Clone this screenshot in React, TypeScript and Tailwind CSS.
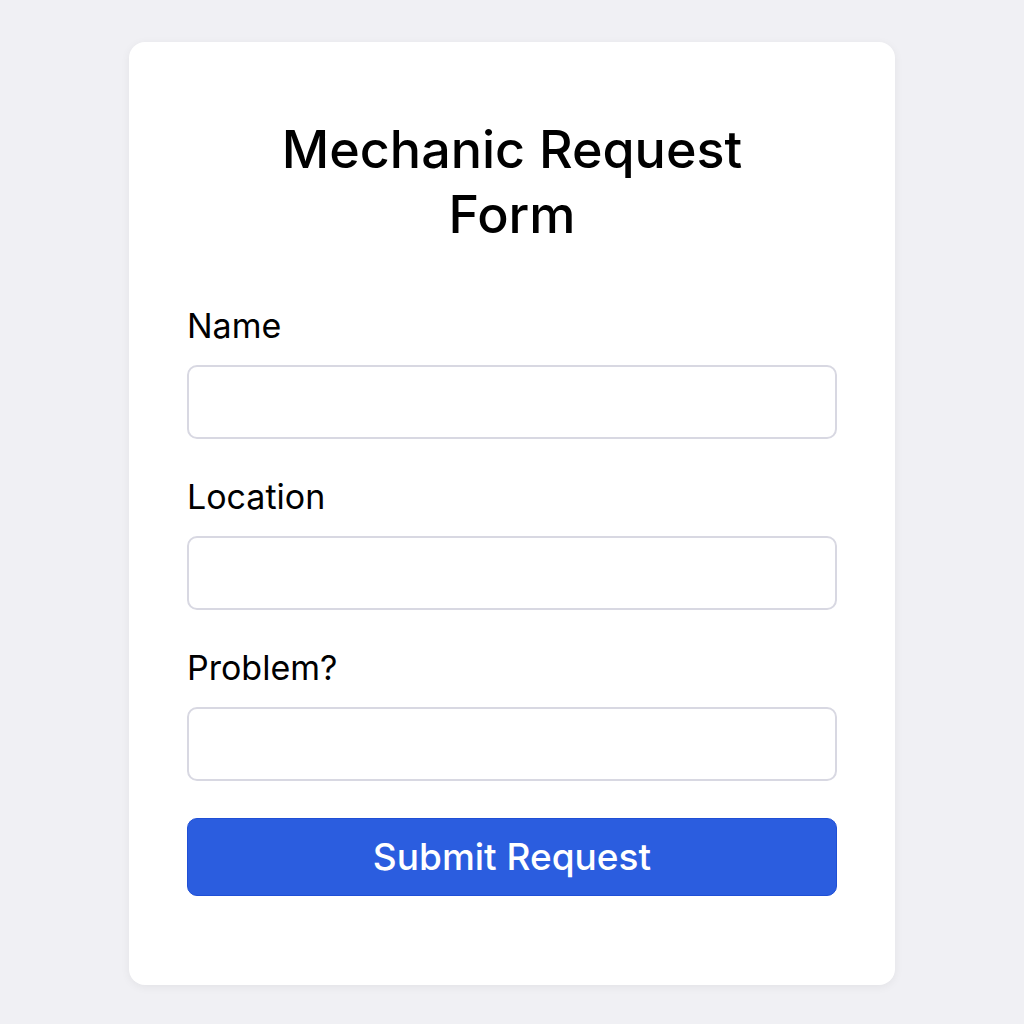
import React from "react";

const fields = ["Name", "Location", "Problem?"];

function Field({ label }: { label: string }) {
  return (
    <div className="flex flex-col">
      <label className="text-[34px] leading-[40px] text-black">{label}</label>
      <input
        type="text"
        className="mt-[19px] h-[74px] w-full rounded-[10px] border-2 border-[#d8d8e2] bg-white px-4 outline-none"
      />
    </div>
  );
}

export default function App() {
  return (
    <div
      className="min-h-[1024px] w-full bg-[#f0f0f4] pt-[42px]"
      style={{ fontFamily: "Inter, 'Noto Sans', sans-serif" }}
    >
      <div className="mx-auto w-[766px] h-[943px] rounded-[16px] bg-white px-[58px] pt-[75px] shadow-[0_2px_10px_rgba(0,0,0,0.06)]">
        <h1 className="text-center text-[52px] leading-[65px] font-medium text-black">
          Mechanic Request
          <br />
          Form
        </h1>
        <div className="mt-[59px] flex flex-col gap-[38px]">
          {fields.map((f) => (
            <Field key={f} label={f} />
          ))}
        </div>
        <button className="mt-[37px] h-[78px] w-full rounded-[10px] border border-[#1f4fd6] bg-[#2b5ddf] text-[37px] font-medium text-white">
          Submit Request
        </button>
      </div>
    </div>
  );
}
